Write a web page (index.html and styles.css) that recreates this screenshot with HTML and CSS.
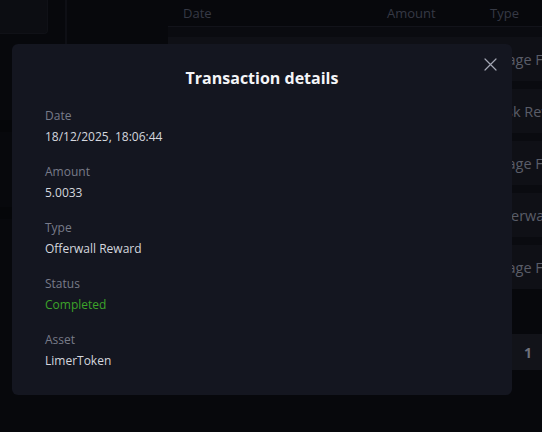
FILE: index.html
```html
<!DOCTYPE html>
<html lang="en">
<head>
<meta charset="utf-8">
<title>Transaction details</title>
<link rel="stylesheet" href="styles.css">
</head>
<body>
<div class="app">
  <aside class="sidebar">
    <div class="side-top"><div class="side-card"></div></div>
    <div class="side-block side-block-a"></div>
    <div class="side-block side-block-b"></div>
  </aside>
  <main class="content">
    <div class="table">
      <div class="thead">
        <span class="col-date">Date</span>
        <span class="col-amount">Amount</span>
        <span class="col-type">Type</span>
      </div>
      <div class="tbody">
        <div class="row"><span class="col-date">18/12/2025</span><span class="col-amount">1.0000</span><span class="col-type">Usage Fee</span></div>
        <div class="row"><span class="col-date">18/12/2025</span><span class="col-amount">2.5000</span><span class="col-type">Task Reward</span></div>
        <div class="row"><span class="col-date">18/12/2025</span><span class="col-amount">1.0000</span><span class="col-type">Usage Fee</span></div>
        <div class="row"><span class="col-date">18/12/2025</span><span class="col-amount">5.0033</span><span class="col-type">Offerwall</span></div>
        <div class="row"><span class="col-date">18/12/2025</span><span class="col-amount">1.0000</span><span class="col-type">Usage Fee</span></div>
      </div>
      <div class="pager"><span class="page-btn">1</span></div>
    </div>
  </main>
</div>

<div class="modal" role="dialog" aria-label="Transaction details">
  <button class="close" aria-label="Close">
    <svg width="13" height="13" viewBox="0 0 13 13"><path d="M1 1L12 12M12 1L1 12" stroke="#a3a6b3" stroke-width="1.2" fill="none" stroke-linecap="round"/></svg>
  </button>
  <h2 class="title">Transaction details</h2>
  <dl class="fields">
    <div class="field"><dt>Date</dt><dd>18/12/2025, 18:06:44</dd></div>
    <div class="field"><dt>Amount</dt><dd>5.0033</dd></div>
    <div class="field"><dt>Type</dt><dd>Offerwall Reward</dd></div>
    <div class="field"><dt>Status</dt><dd class="ok">Completed</dd></div>
    <div class="field"><dt>Asset</dt><dd>LimerToken</dd></div>
  </dl>
</div>
</body>
</html>
```

FILE: styles.css
```css
* { box-sizing: border-box; }
html, body { margin: 0; padding: 0; }
body {
  width: 542px;
  height: 432px;
  overflow: hidden;
  background: #07080c;
  font-family: "Open Sans", "Liberation Sans", sans-serif;
  position: relative;
}
.app { display: flex; height: 432px; width: 542px; overflow: hidden; }
.sidebar {
  flex: 0 0 67px;
  display: flex;
  flex-direction: column;
}
.side-top {
  height: 60px;
  border-right: 2px solid #0e0f15;
}
.side-card {
  width: 48px;
  height: 34px;
  background: #0c0d12;
  border: 1px solid #101117;
  border-top: none;
  border-left: none;
  border-bottom-right-radius: 4px;
}
.side-block { height: 12px; width: 12px; background: #050609; }
.side-block-a { margin-top: 60px; }
.side-block-b { margin-top: 75px; }
.content { flex: 1 1 auto; min-width: 0; padding-left: 101px; overflow: hidden; }
.table { display: flex; flex-direction: column; width: 374px; }
.thead {
  display: flex;
  height: 27px;
  align-items: center;
  border-bottom: 1px solid #12131a;
  color: #363945;
  font-size: 13px;
  padding-left: 15px;
}
.col-date { flex: 0 0 204px; }
.col-amount { flex: 0 0 103px; }
.col-type { white-space: nowrap; }
.tbody {
  background: #0a0b10;
  padding-top: 10px;
  display: flex;
  flex-direction: column;
  gap: 8px;
}
.row {
  height: 44px;
  background: #0f1016;
  display: flex;
  align-items: center;
  padding-left: 15px;
  color: #5a5d68;
  font-size: 14.5px;
  white-space: nowrap;
  overflow: hidden;
}
.pager {
  margin-top: 45px;
  display: flex;
  justify-content: flex-end;
}
.page-btn {
  width: 60px;
  height: 36px;
  background: #121319;
  color: #6e717c;
  font-weight: 700;
  font-size: 14px;
  display: flex;
  align-items: center;
  padding-left: 42px;
  flex-shrink: 0;
}
.modal {
  position: absolute;
  left: 12px;
  top: 44px;
  width: 500px;
  height: 351px;
  background: #141620;
  border-radius: 6px;
  padding: 24px 33px 24px;
}
.close {
  position: absolute;
  right: 14px;
  top: 14px;
  width: 14px;
  height: 14px;
  padding: 0;
  border: none;
  background: none;
  display: flex;
}
.title {
  margin: 0;
  text-align: center;
  font-size: 16px;
  line-height: 20px;
  font-weight: 700;
  color: #f4f5f8;
}
.fields { margin: 18px 0 0; display: flex; flex-direction: column; gap: 15px; }
.field { display: flex; flex-direction: column; gap: 1px; }
.field dt {
  font-size: 12px;
  line-height: 20px;
  color: #787b89;
}
.field dd {
  margin: 0;
  font-size: 12px;
  line-height: 20px;
  color: #d5d7de;
}
.field dd.ok { color: #3da42a; }
```
